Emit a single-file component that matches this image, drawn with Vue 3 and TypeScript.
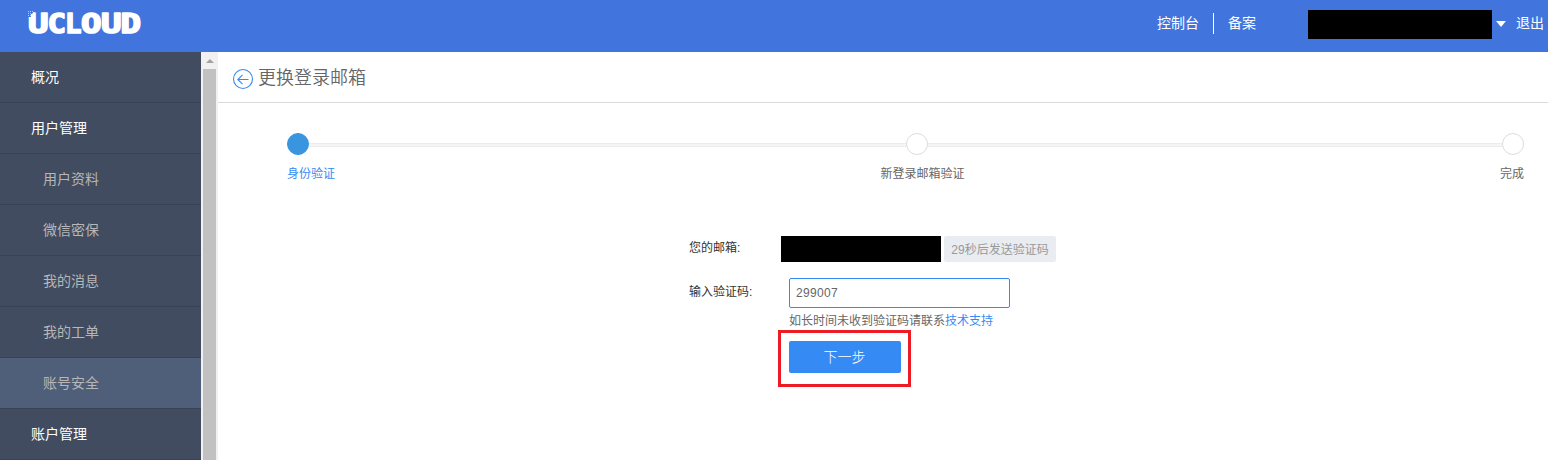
<script setup lang="ts">
import { ref } from 'vue'

interface MenuItem {
  label: string
  sub?: boolean
  active?: boolean
}

const menu: MenuItem[] = [
  { label: '概况' },
  { label: '用户管理' },
  { label: '用户资料', sub: true },
  { label: '微信密保', sub: true },
  { label: '我的消息', sub: true },
  { label: '我的工单', sub: true },
  { label: '账号安全', sub: true, active: true },
  { label: '账户管理' },
]

const code = ref<string>('299007')
</script>

<template>
  <div class="page">
    <header class="topbar">
      <svg class="logo" width="124" height="44" viewBox="0 0 124 44" role="img" aria-label="UCLOUD">
        <g class="logo-text">
          <text x="4" y="28.5" textLength="20.5" lengthAdjust="spacingAndGlyphs">U</text>
          <text x="23.5" y="28.5" textLength="18.5" lengthAdjust="spacingAndGlyphs">C</text>
          <text x="41" y="28.5" textLength="16.5" lengthAdjust="spacingAndGlyphs">L</text>
          <text x="57" y="28.5" textLength="20.5" lengthAdjust="spacingAndGlyphs">O</text>
          <text x="77" y="28.5" textLength="20.5" lengthAdjust="spacingAndGlyphs">U</text>
          <text x="96.5" y="28.5" textLength="20.5" lengthAdjust="spacingAndGlyphs">D</text>
        </g>
        <g class="logo-gap">
          <rect x="3" y="7" width="4" height="6" />
          <rect x="7" y="7" width="2" height="3" />
        </g>
        <g class="logo-dots">
          <rect x="4" y="7" width="1" height="1" /><rect x="6" y="7" width="1" height="1" />
          <rect x="8" y="7" width="1" height="1" /><rect x="4" y="9" width="1" height="1" />
          <rect x="6" y="9" width="1" height="1" /><rect x="8" y="9" width="1" height="1" />
          <rect x="4" y="11" width="1" height="1" /><rect x="6" y="11" width="1" height="1" />
        </g>
      </svg>
      <nav class="topnav">
        <a>控制台</a>
        <i class="divider"></i>
        <a>备案</a>
        <span class="account"></span>
        <i class="caret"></i>
        <a>退出</a>
      </nav>
    </header>

    <div class="body">
      <aside class="sidebar">
        <div v-for="m in menu" :key="m.label" class="item" :class="{ sub: m.sub, active: m.active }">
          {{ m.label }}
        </div>
      </aside>
      <div class="scrollbar">
        <i class="up"></i>
        <div class="thumb"></div>
      </div>

      <main class="main">
        <div class="title">
          <svg width="22" height="22" viewBox="0 0 22 22" fill="none">
            <circle cx="11" cy="11" r="9.5" />
            <path d="M16.5 11.5H5.8M10.5 6.8L5.8 11.5l4.7 4.7" />
          </svg>
          <h1>更换登录邮箱</h1>
        </div>

        <div class="steps">
          <div class="track">
            <i class="dot on"></i>
            <i class="line first"></i>
            <i class="dot"></i>
            <i class="line second"></i>
            <i class="dot"></i>
          </div>
          <div class="labels">
            <span class="current">身份验证</span>
            <span class="middle">新登录邮箱验证</span>
            <span>完成</span>
          </div>
        </div>

        <form class="form" @submit.prevent>
          <div class="row mail">
            <label>您的邮箱:</label>
            <span class="address"></span>
            <button class="resend" type="button" disabled>29秒后发送验证码</button>
          </div>
          <div class="row verify">
            <label>输入验证码:</label>
            <div class="field">
              <input v-model="code" type="text" />
              <p>如长时间未收到验证码请联系<a>技术支持</a></p>
            </div>
          </div>
          <div class="highlight">
            <button class="next" type="submit">下一步</button>
          </div>
        </form>
      </main>
    </div>
  </div>
</template>

<style>
body {
  margin: 0;
  overflow: hidden;
}
</style>

<style scoped>
.page {
  height: 460px;
  overflow: hidden;
  display: flex;
  flex-direction: column;
  background: #fff;
  color: #666;
  font: 12px/18px "Liberation Sans", "Noto Sans CJK SC", sans-serif;
}
.page * {
  box-sizing: border-box;
}
.topbar {
  flex: none;
  height: 52px;
  display: flex;
  align-items: flex-start;
  justify-content: space-between;
  padding: 0 4px 0 24px;
  background: #4175dd;
}
.logo {
  margin-top: 4px;
}
.logo-text {
  fill: #fff;
  stroke: #fff;
  stroke-width: 1.6;
  stroke-linejoin: round;
  font: bold 26px "DejaVu Sans Mono", monospace;
}
.logo-gap {
  fill: #4175dd;
}
.logo-dots {
  fill: #b9cdf4;
}
.topnav {
  display: flex;
  align-items: center;
  height: 29px;
  margin-top: 10px;
  color: #fff;
  font-size: 14px;
}
.topnav a {
  margin-top: -4px;
}
.divider {
  width: 1px;
  height: 21px;
  margin: -3px 14px 0;
  background: #fff;
}
.account {
  width: 184px;
  height: 29px;
  margin-left: 52px;
  background: #000;
}
.caret {
  margin: -2px 10px 0 4px;
  border: 5px solid transparent;
  border-top: 6px solid #fff;
  border-bottom: 0;
}
.body {
  flex: 1;
  min-height: 0;
  display: flex;
}
.sidebar {
  flex: none;
  width: 201px;
  background: #414c60;
}
.item {
  height: 51px;
  padding-left: 31px;
  border-bottom: 1px solid #394354;
  color: #fff;
  font-size: 14px;
  line-height: 51px;
}
.item.sub {
  padding-left: 43px;
  color: #b7b7b7;
}
.item.active {
  background: #4f5f7a;
}
.scrollbar {
  flex: none;
  width: 17px;
  padding: 0 2px;
  background: #f1f1f1;
}
.up {
  display: block;
  width: 8px;
  margin: 7px 0 6px 3px;
  border: 4px solid transparent;
  border-top: 0;
  border-bottom-color: #a3a3a3;
}
.thumb {
  height: 400px;
  background: #c1c1c1;
}
.main {
  flex: 1;
  min-width: 0;
}
.title {
  display: flex;
  align-items: center;
  height: 51px;
  padding: 2px 0 0 14px;
  border-bottom: 1px solid #d9dadd;
}
.title svg {
  stroke: #368af4;
  stroke-width: 1.1;
  margin-top: 2px;
}
.title h1 {
  margin: 0 0 0 4px;
  color: #666;
  font-size: 18px;
  font-weight: 350;
  line-height: 26px;
}
.steps {
  padding: 30px 24px 0 69px;
}
.track {
  display: flex;
  align-items: center;
}
.dot {
  flex: none;
  width: 22px;
  height: 22px;
  border: 1px solid #dcdde0;
  border-radius: 50%;
}
.dot.on {
  border-color: #3a95df;
  background: #3a95df;
}
.line {
  height: 4px;
  margin-top: 1px;
  background: #f5f5f5;
  border: solid #ebecee;
  border-width: 1px 0;
}
.first {
  flex: 597 0 0;
}
.second {
  flex: 574 0 0;
}
.labels {
  display: flex;
  justify-content: space-between;
  margin-top: 10px;
}
.current {
  color: #368af4;
}
.middle {
  margin-left: 10px;
}
.form {
  padding: 53px 0 0 471px;
}
.row {
  display: flex;
  align-items: flex-start;
}
.row label {
  flex: none;
  width: 92px;
  color: #333;
}
.mail label {
  padding-top: 3px;
}
.address {
  width: 160px;
  height: 26px;
  background: #000;
}
.resend {
  width: 112px;
  height: 26px;
  margin-left: 3px;
  padding: 2px 0 0;
  border: 0;
  border-radius: 2px;
  background: #e9ecf1;
  color: #999;
  font: inherit;
}
.verify {
  margin-top: 16px;
}
.verify label {
  width: 100px;
  padding-top: 5px;
}
.field input {
  display: block;
  width: 221px;
  height: 30px;
  padding: 0 6px;
  border: 1px solid #368af4;
  border-radius: 2px;
  outline: 0;
  color: #666;
  font: inherit;
  letter-spacing: 0.33px;
}
.field p {
  margin: 4px 0 0;
}
.field a {
  color: #368af4;
}
.highlight {
  width: 133px;
  height: 57px;
  margin-left: 89px;
  padding: 8px;
  border: 3px solid #ed1c24;
}
.next {
  display: block;
  width: 112px;
  height: 32px;
  padding: 0 1px 0 0;
  border: 0;
  border-radius: 2px;
  background: #368af4;
  color: #fff;
  font: inherit;
  font-size: 14px;
  font-weight: 300;
}
</style>
